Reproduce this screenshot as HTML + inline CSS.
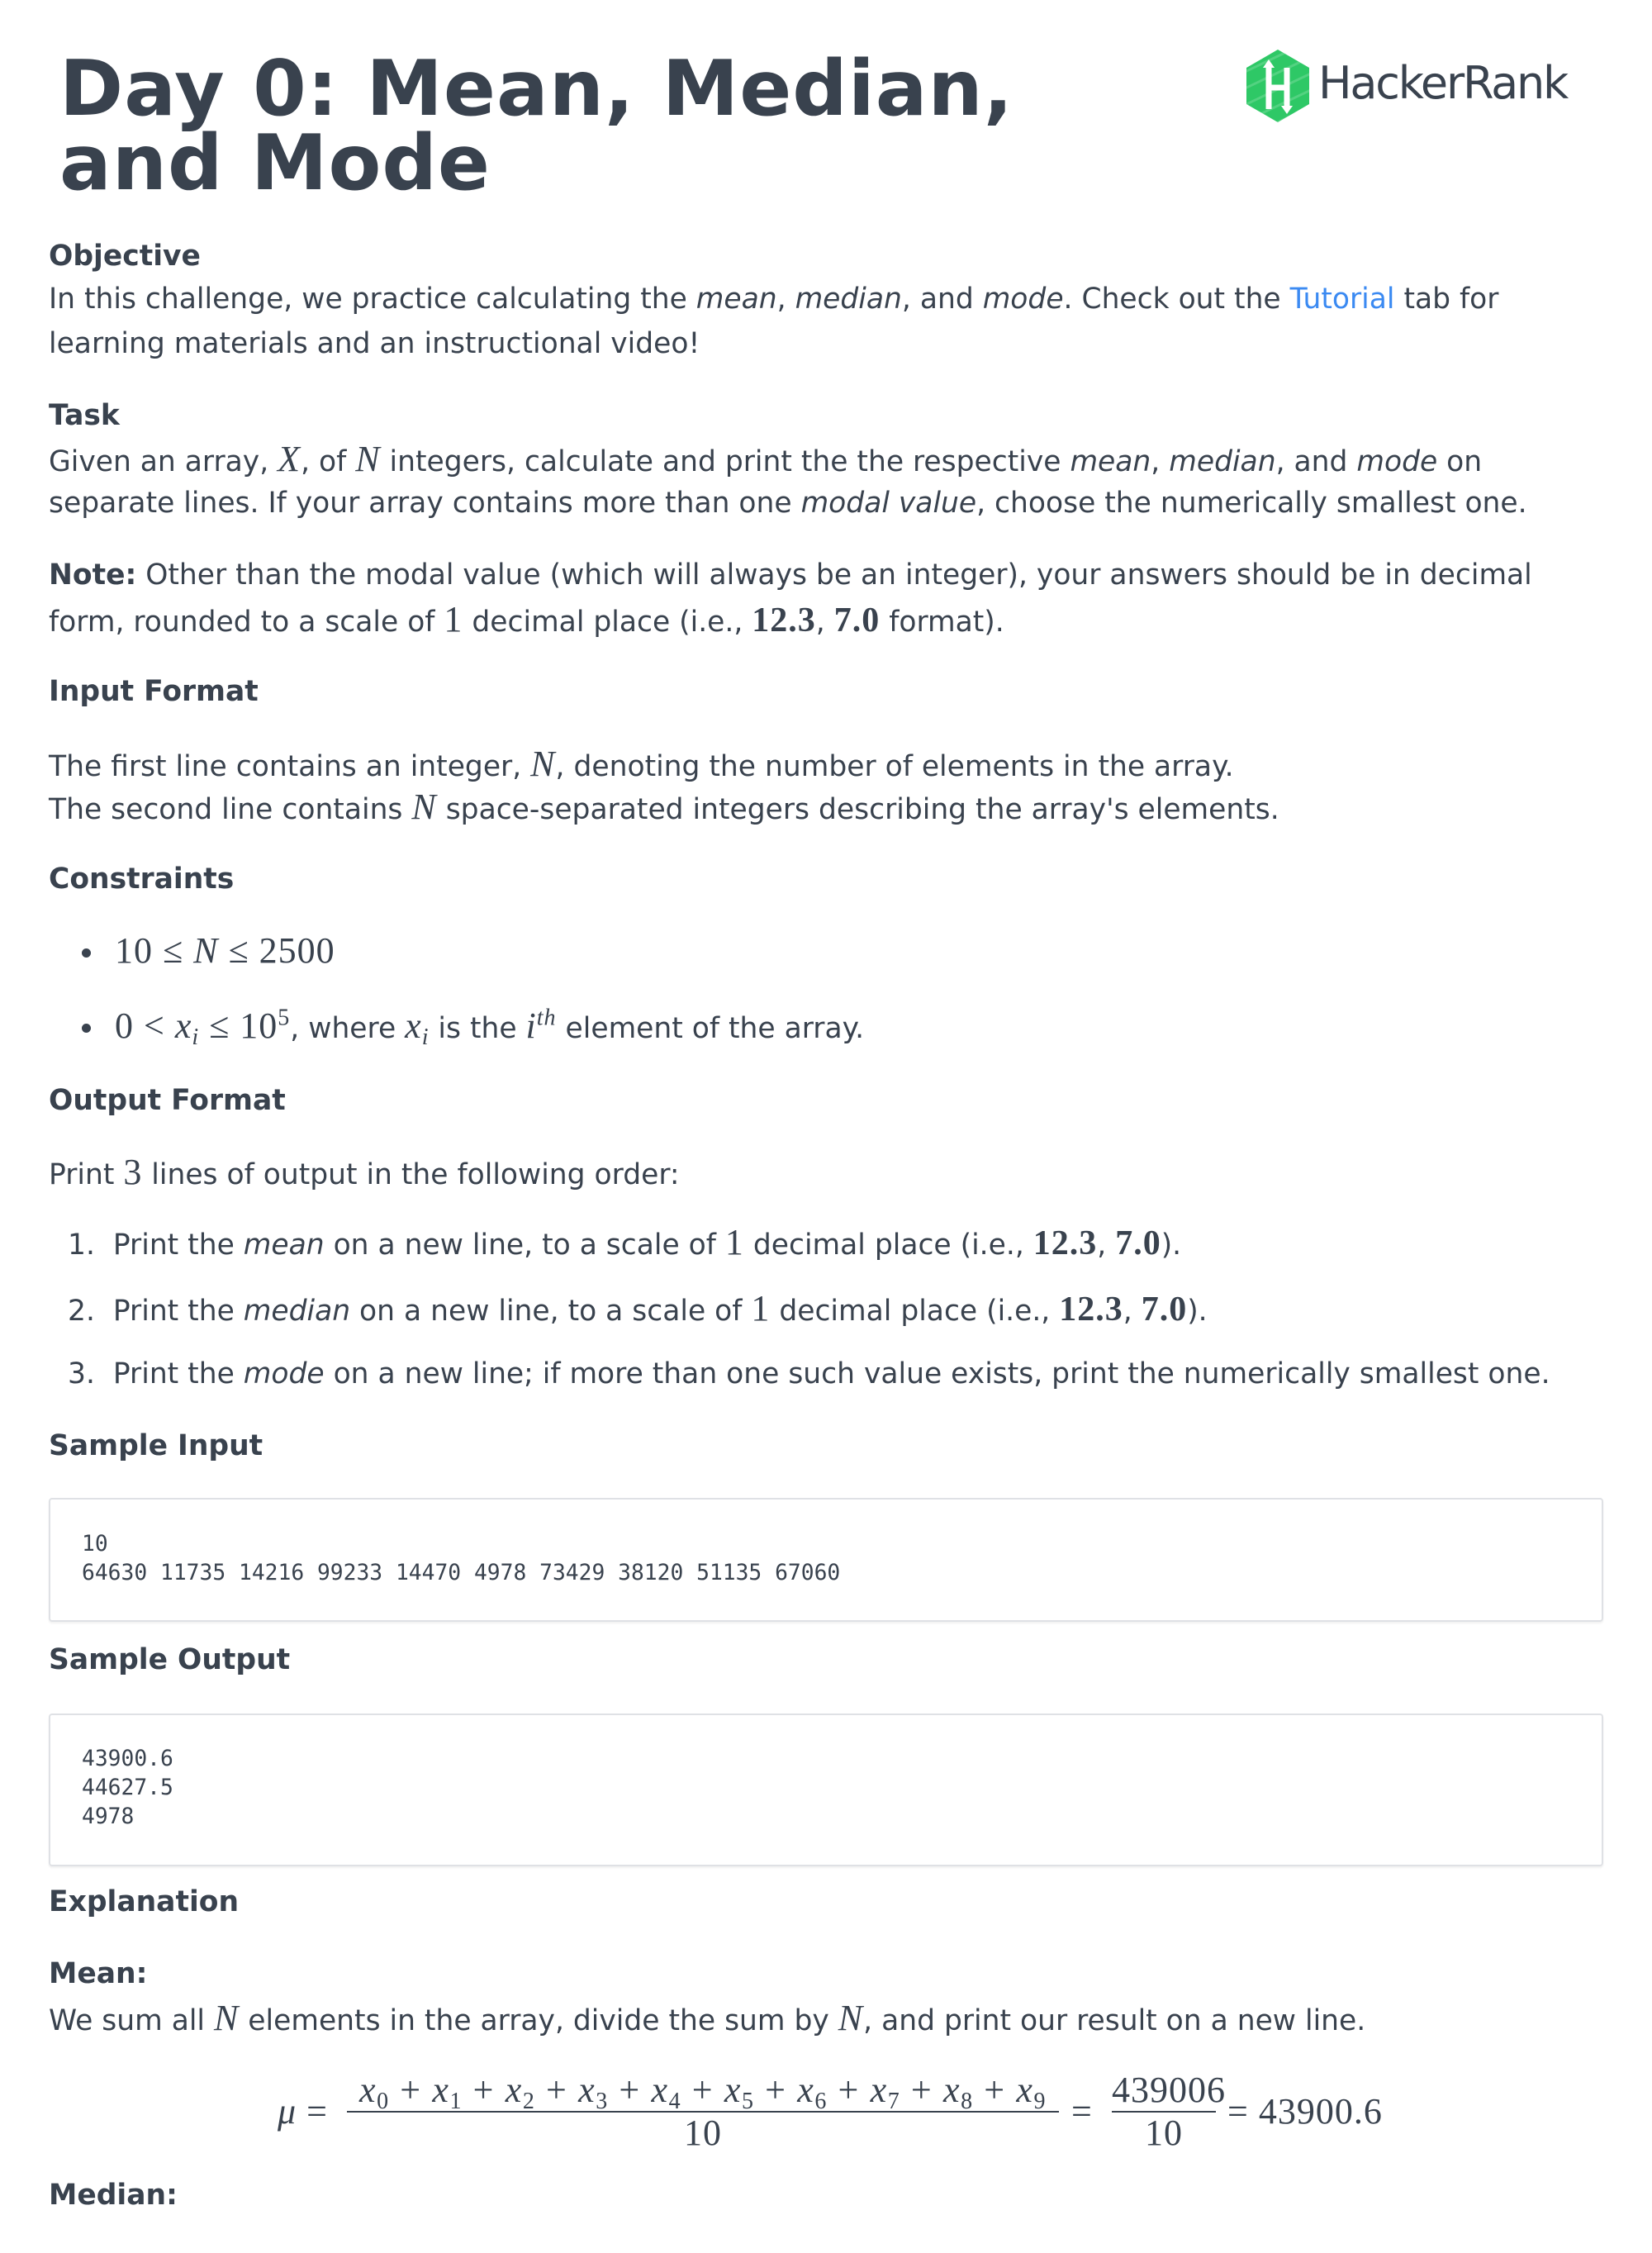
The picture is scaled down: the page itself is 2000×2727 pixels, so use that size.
<!DOCTYPE html>
<html><head><meta charset="utf-8"><style>
html,body{margin:0;padding:0;background:#fff;}
body{width:2000px;height:2727px;position:relative;overflow:hidden;color:#39424e;font-family:"DejaVu Sans","Liberation Sans",sans-serif;}
.l{position:absolute;left:59px;font-size:34.5px;line-height:52px;white-space:nowrap;}
.h{font-weight:bold;}
i{font-style:italic;}
.m{font-family:"Liberation Serif",serif;font-style:italic;font-size:44px;letter-spacing:1px;}
.n{font-family:"Liberation Serif",serif;font-size:44px;letter-spacing:1px;}
.b{font-family:"Liberation Serif",serif;font-weight:bold;font-size:42px;letter-spacing:1px;}
a{color:#3b8af2;text-decoration:none;}
.box{position:absolute;left:59px;width:1878px;border:2px solid #dfe1e5;border-radius:4px;box-shadow:0 2px 2px rgba(0,0,0,.06);}
.code{position:absolute;left:99px;font-family:"DejaVu Sans Mono",monospace;font-size:26.3px;line-height:35px;white-space:pre;color:#39424e;}
.f{position:absolute;font-family:"Liberation Serif",serif;font-size:44px;line-height:48px;white-space:nowrap;text-align:center;letter-spacing:1px;}
sub{font-size:28px;vertical-align:-8px;line-height:0;font-style:normal;}
sup{font-size:28px;line-height:0;}
.dot{position:absolute;left:99px;width:11px;height:11px;border-radius:50%;background:#39424e;}
</style></head><body>
<div style="position:absolute;left:72px;top:62px;font-size:93px;line-height:90px;font-weight:bold;letter-spacing:1px;">Day 0: Mean, Median,<br>and Mode</div>
<svg style="position:absolute;left:1505px;top:58px" width="84" height="92" viewBox="0 0 84 92">
<polygon points="42,2 80,24 80,68 42,90 4,68 4,24" fill="#2ec866"/>
<g stroke="#fff" stroke-opacity=".18" stroke-width="3"><line x1="0" y1="30" x2="84" y2="-10"/><line x1="0" y1="50" x2="84" y2="10"/><line x1="0" y1="70" x2="84" y2="30"/><line x1="0" y1="90" x2="84" y2="50"/><line x1="0" y1="110" x2="84" y2="70"/></g>
<path d="M31 24v50M53 24v50M31 48h22" stroke="#fff" stroke-width="7" fill="none"/>
<polygon points="31,14 24,24 38,24" fill="#fff"/><polygon points="53,80 46,70 60,70" fill="#fff"/>
</svg>
<div style="position:absolute;left:1596px;top:66px;font-size:54px;line-height:70px;letter-spacing:-2.2px;color:#39424e;">HackerRank</div>

<div class="l h" style="top:284px">Objective</div>
<div class="l" style="top:336px">In this challenge, we practice calculating the <i>mean</i>, <i>median</i>, and <i>mode</i>. Check out the <a>Tutorial</a> tab for</div>
<div class="l" style="top:390px">learning materials and an instructional video!</div>
<div class="l h" style="top:477px">Task</div>
<div class="l" style="top:530px">Given an array, <span class="m">X</span>, of <span class="m">N</span> integers, calculate and print the the respective <i>mean</i>, <i>median</i>, and <i>mode</i> on</div>
<div class="l" style="top:583px">separate lines. If your array contains more than one <i>modal value</i>, choose the numerically smallest one.</div>
<div class="l" style="top:670px"><b>Note:</b> Other than the modal value (which will always be an integer), your answers should be in decimal</div>
<div class="l" style="top:724px">form, rounded to a scale of <span class="n">1</span> decimal place (i.e., <span class="b">12.3</span>, <span class="b">7.0</span> format).</div>
<div class="l h" style="top:811px">Input Format</div>
<div class="l" style="top:899px">The first line contains an integer, <span class="m">N</span>, denoting the number of elements in the array.</div>
<div class="l" style="top:951px">The second line contains <span class="m">N</span> space-separated integers describing the array's elements.</div>
<div class="l h" style="top:1038px">Constraints</div>
<div class="dot" style="top:1148px"></div>
<div class="l" style="top:1125px;left:139px"><span class="n">10 ≤ <i>N</i> ≤ 2500</span></div>
<div class="dot" style="top:1239px"></div>
<div class="l" style="top:1216px;left:139px"><span class="n">0 &lt; <i>x</i><sub><i>i</i></sub> ≤ 10<sup>5</sup></span>, where <span class="m">x</span><sub class="m" style="font-size:28px"><i>i</i></sub> is the <span class="m">i<sup>th</sup></span> element of the array.</div>
<div class="l h" style="top:1306px">Output Format</div>
<div class="l" style="top:1393px">Print <span class="n">3</span> lines of output in the following order:</div>
<div class="l" style="top:1478px;left:82px">1.&nbsp; Print the <i>mean</i> on a new line, to a scale of <span class="n">1</span> decimal place (i.e., <span class="b">12.3</span>, <span class="b">7.0</span>).</div>
<div class="l" style="top:1558px;left:82px">2.&nbsp; Print the <i>median</i> on a new line, to a scale of <span class="n">1</span> decimal place (i.e., <span class="b">12.3</span>, <span class="b">7.0</span>).</div>
<div class="l" style="top:1637px;left:82px">3.&nbsp; Print the <i>mode</i> on a new line; if more than one such value exists, print the numerically smallest one.</div>
<div class="l h" style="top:1724px">Sample Input</div>
<div class="box" style="top:1813px;height:146px"></div>
<div class="code" style="top:1852px">10
64630 11735 14216 99233 14470 4978 73429 38120 51135 67060</div>
<div class="l h" style="top:1983px">Sample Output</div>
<div class="box" style="top:2074px;height:181px"></div>
<div class="code" style="top:2112px">43900.6
44627.5
4978</div>
<div class="l h" style="top:2276px">Explanation</div>
<div class="l h" style="top:2363px">Mean:</div>
<div class="l" style="top:2417px">We sum all <span class="m">N</span> elements in the array, divide the sum by <span class="m">N</span>, and print our result on a new line.</div>

<div class="f" style="left:336px;top:2532px"><i>μ</i> =</div>
<div class="f" style="left:420px;width:862px;top:2506px;letter-spacing:1.6px"><i>x</i><sub>0</sub> + <i>x</i><sub>1</sub> + <i>x</i><sub>2</sub> + <i>x</i><sub>3</sub> + <i>x</i><sub>4</sub> + <i>x</i><sub>5</sub> + <i>x</i><sub>6</sub> + <i>x</i><sub>7</sub> + <i>x</i><sub>8</sub> + <i>x</i><sub>9</sub></div>
<div style="position:absolute;left:420px;width:862px;top:2555px;height:2px;background:#39424e"></div>
<div class="f" style="left:420px;width:862px;top:2558px">10</div>
<div class="f" style="left:1297px;top:2532px">=</div>
<div class="f" style="left:1346px;width:126px;top:2506px">439006</div>
<div style="position:absolute;left:1346px;width:126px;top:2555px;height:2px;background:#39424e"></div>
<div class="f" style="left:1346px;width:126px;top:2558px">10</div>
<div class="f" style="left:1486px;top:2532px">= 43900.6</div>

<div class="l h" style="top:2631px">Median:</div>
</body></html>
